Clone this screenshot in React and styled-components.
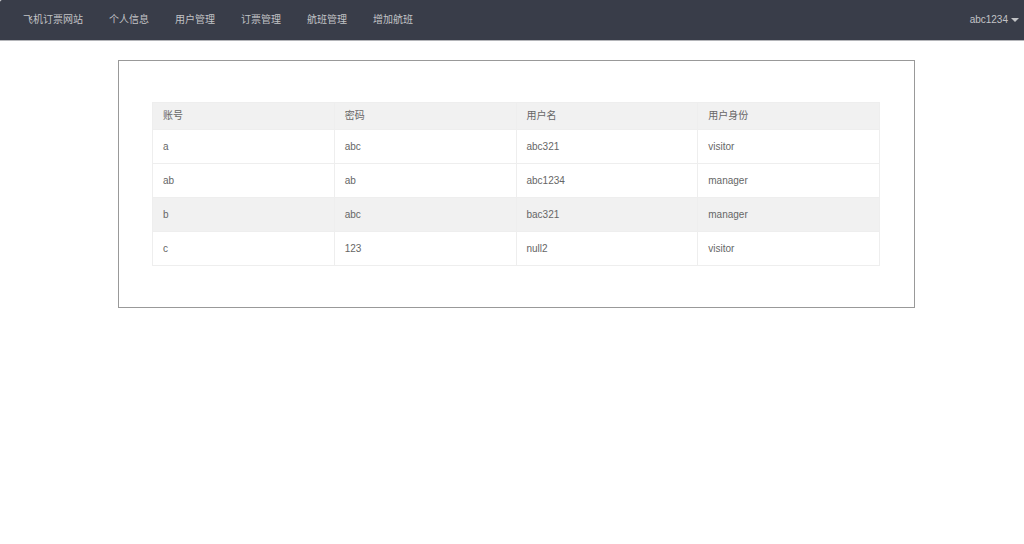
import { useState } from "react";
import styled, { createGlobalStyle } from "styled-components";

const MENU = [
  { id: 0, name: "飞机订票网站" },
  { id: 1, name: "个人信息" },
  { id: 2, name: "用户管理" },
  { id: 3, name: "订票管理" },
  { id: 4, name: "航班管理" },
  { id: 5, name: "增加航班" },
];

const COLUMNS = ["账号", "密码", "用户名", "用户身份"];

const USERS = [
  { account: "a", password: "abc", name: "abc321", role: "visitor" },
  { account: "ab", password: "ab", name: "abc1234", role: "manager" },
  { account: "b", password: "abc", name: "bac321", role: "manager" },
  { account: "c", password: "123", name: "null2", role: "visitor" },
];

const App = () => {
  const [activeRow, setActiveRow] = useState("b");

  return (
    <>
      <GlobalStyle />
      <Nav>
        <MenuList>
          {MENU.map((item) => (
            <li key={item.id}>
              <MenuLink href="#">{item.name}</MenuLink>
            </li>
          ))}
        </MenuList>
        <UserButton type="button">
          abc1234
          <Caret viewBox="0 0 8 4" aria-hidden="true">
            <path d="M0 0h8L4 4z" />
          </Caret>
        </UserButton>
      </Nav>
      <Panel>
        <Table>
          <thead>
            <HeadRow>
              {COLUMNS.map((column) => (
                <Cell as="th" key={column}>
                  {column}
                </Cell>
              ))}
            </HeadRow>
          </thead>
          <tbody>
            {USERS.map((user) => (
              <Row
                key={user.account}
                $active={activeRow === user.account}
                onMouseEnter={() => setActiveRow(user.account)}
              >
                <Cell>{user.account}</Cell>
                <Cell>{user.password}</Cell>
                <Cell>{user.name}</Cell>
                <Cell>{user.role}</Cell>
              </Row>
            ))}
          </tbody>
        </Table>
      </Panel>
    </>
  );
};

const GlobalStyle = createGlobalStyle`
  * {
    box-sizing: border-box;
  }
  body {
    margin: 0;
    background-color: #fff;
    color: #666;
    font: 10px/16px "Liberation Sans", "Noto Sans CJK SC", sans-serif;
  }
`;

const Nav = styled.nav`
  display: flex;
  align-items: center;
  justify-content: space-between;
  height: 41px;
  padding: 0 5px 0 10px;
  border-bottom: 1px solid #b4b5b9;
  border-top-left-radius: 2px;
  background-color: #393d49;
`;

const MenuList = styled.ul`
  display: flex;
  margin: 0;
  padding: 0;
  list-style: none;
`;

const MenuLink = styled.a`
  display: block;
  padding: 0 13px;
  color: #c2c3c6;
  line-height: 40px;
  text-decoration: none;

  &:hover {
    color: #fff;
  }
`;

const UserButton = styled.button`
  display: flex;
  align-items: center;
  gap: 3px;
  padding: 0;
  border: 0;
  background: none;
  color: #c2c3c6;
  font: inherit;
  line-height: 40px;
  cursor: pointer;
`;

const Caret = styled.svg`
  width: 8px;
  height: 4px;
  fill: #c2c3c6;
`;

const Panel = styled.main`
  margin: 19px 109px 20px 118px;
  padding: 41px 34px 41px 33px;
  border: 1px solid #999;
`;

const Table = styled.table`
  width: 100%;
  border-collapse: collapse;
  table-layout: fixed;
`;

const HeadRow = styled.tr`
  height: 27px;
  background-color: #f1f1f1;
`;

const Row = styled.tr`
  height: 34px;
  background-color: ${(props) => (props.$active ? "#f1f1f1" : "#fff")};
`;

const Cell = styled.td`
  padding: 0 10px;
  border: 1px solid #eee;
  font-weight: 400;
  text-align: left;
`;

export default App;
